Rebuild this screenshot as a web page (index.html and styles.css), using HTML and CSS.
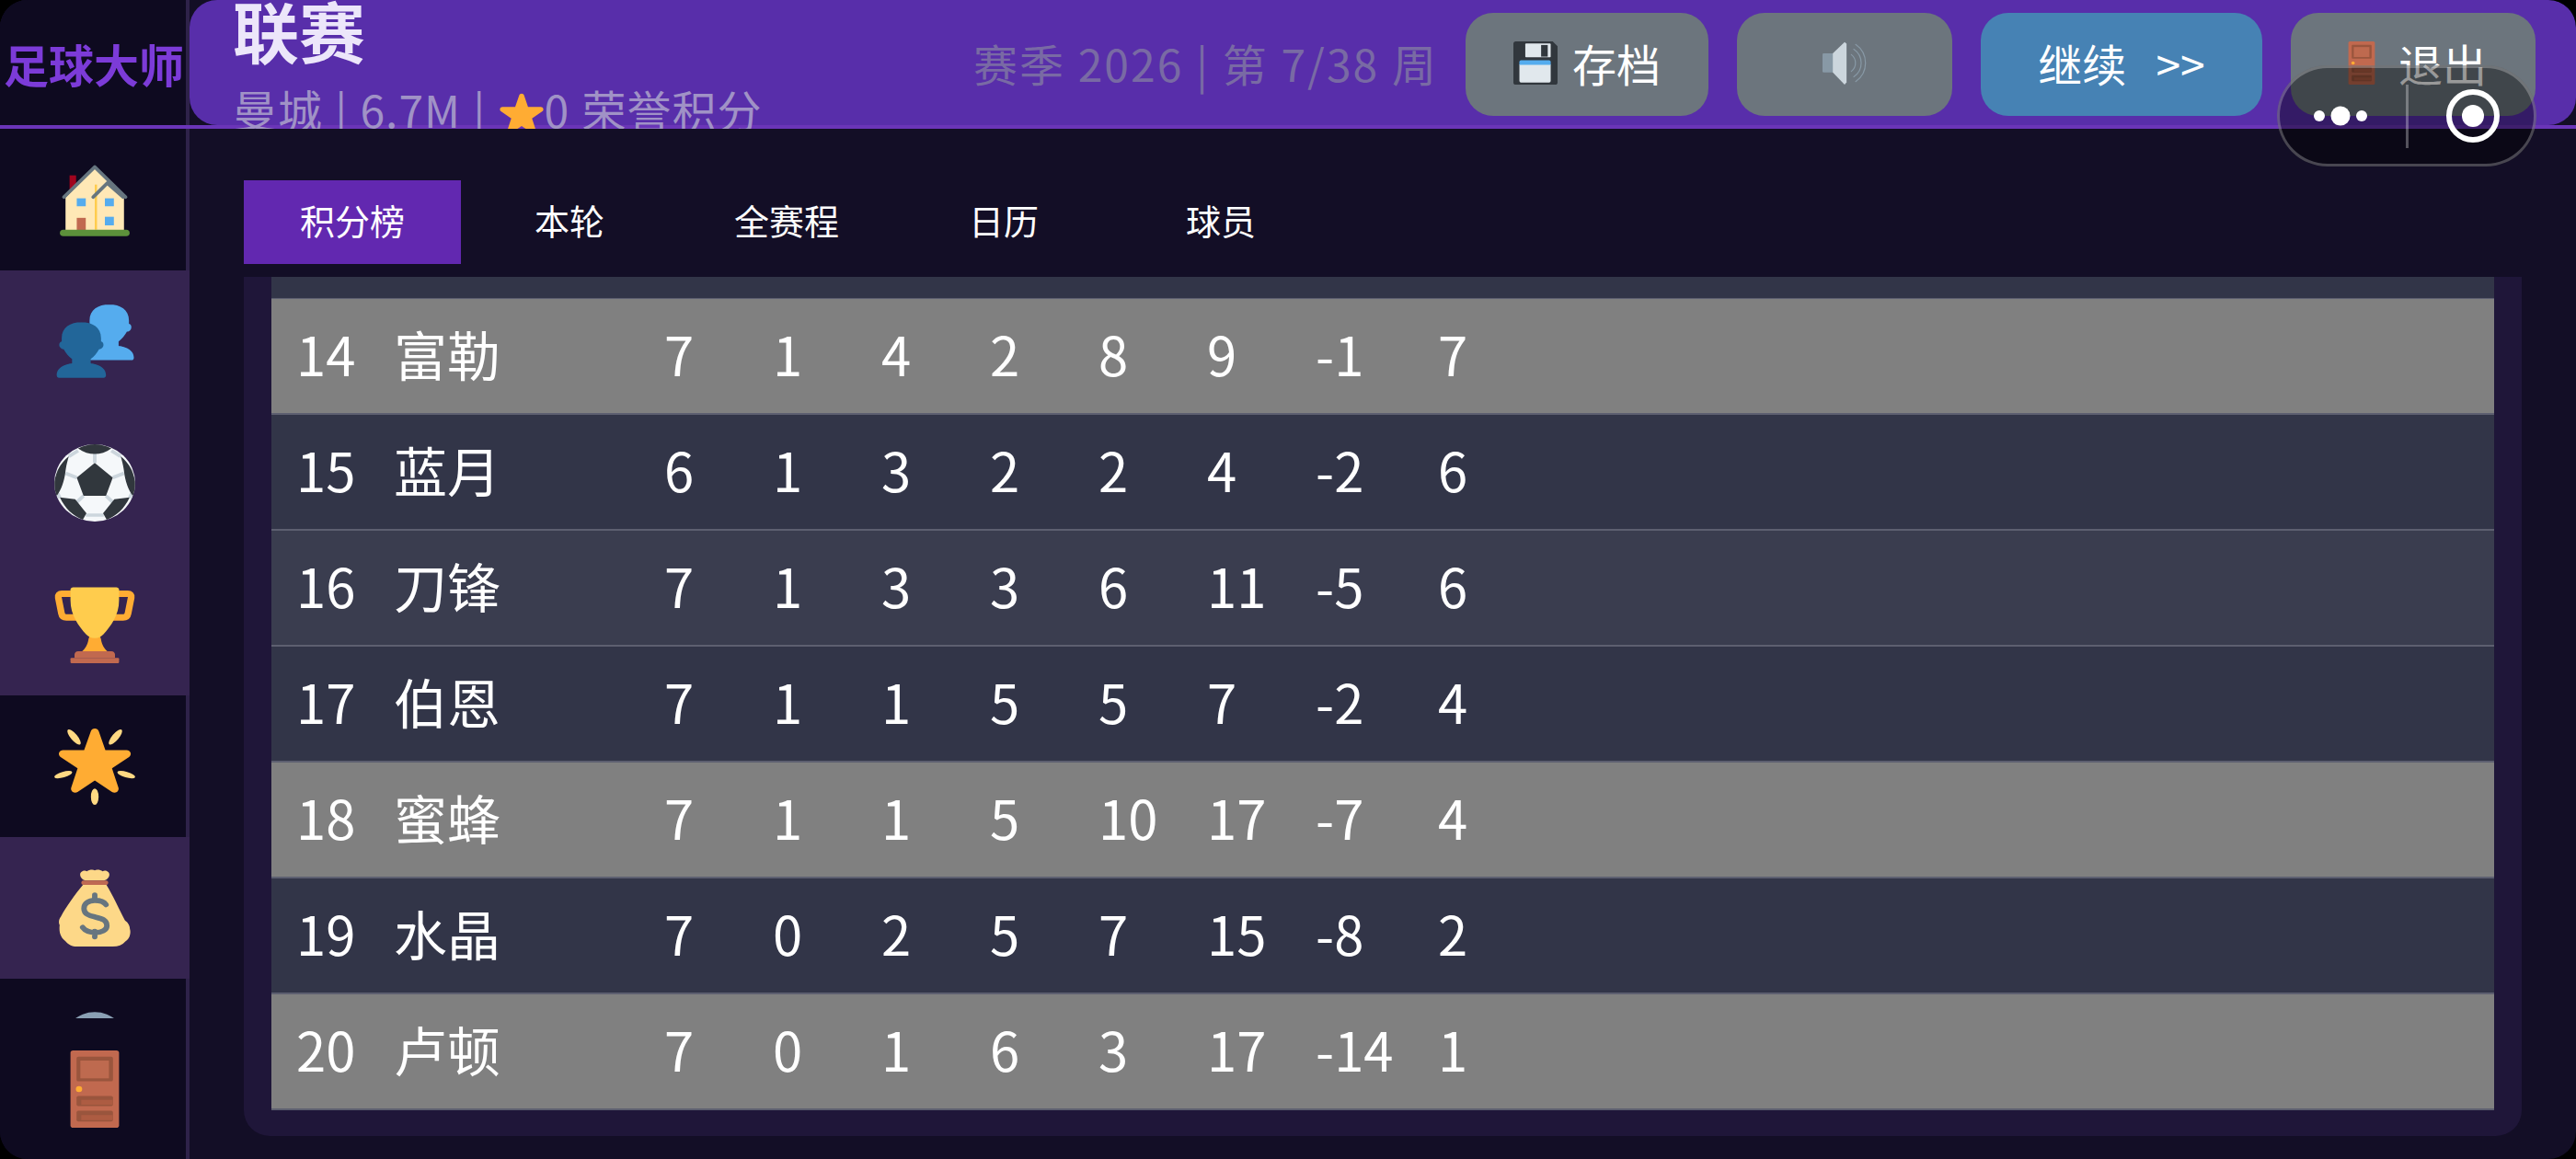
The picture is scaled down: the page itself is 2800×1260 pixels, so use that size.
FILE: index.html
```html
<!DOCTYPE html>
<html lang="zh">
<head>
  <meta charset="utf-8">
  <title>足球大师</title>
  <link rel="stylesheet" href="styles.css">
</head>
<body>
  <svg class="icon-defs" width="0" height="0">
    <defs>
      <symbol id="i-star" viewBox="0 0 36 36" preserveAspectRatio="none">
        <path id="star-shape" fill="#FFAC33" d="M27.287 34.627c-.404 0-.806-.124-1.152-.371L18 28.422l-8.135 5.834c-.693.496-1.623.496-2.312-.008-.689-.499-.979-1.385-.721-2.194l3.034-9.792-8.062-5.681c-.685-.505-.97-1.393-.708-2.203.264-.808 1.016-1.357 1.866-1.363L12.947 13l3.179-9.549c.268-.809 1.023-1.353 1.874-1.353.851 0 1.606.545 1.875 1.353L23 13l10.036.015c.853.006 1.606.556 1.867 1.363.263.81-.022 1.698-.708 2.203l-8.062 5.681 3.034 9.792c.26.809-.033 1.695-.72 2.194-.347.254-.753.379-1.16.379z"/>
      </symbol>
      <symbol id="i-door" viewBox="0 0 36 36" preserveAspectRatio="none">
        <rect x="7.2" y="0" width="21.6" height="36" rx="1.2" fill="#C1694F"/>
        <rect x="9.9" y="2.9" width="16.2" height="11.5" rx=".8" fill="#99553D"/>
        <rect x="11.6" y="4.7" width="12.7" height="8.3" fill="#BE6A4F"/>
        <circle cx="11" cy="18" r="1.4" fill="#FFAC33"/>
        <rect x="9.9" y="21.2" width="16.2" height="4.7" rx=".8" fill="#99553D"/>
        <rect x="12" y="23" width="14" height="2.3" fill="#AD5C42"/>
        <rect x="9.9" y="28.1" width="16.2" height="5" rx=".8" fill="#99553D"/>
        <rect x="12" y="30.1" width="14" height="2.4" fill="#AD5C42"/>
      </symbol>
    </defs>
  </svg>

  <div class="app">
    <div class="topbar">
      <div class="logo">足球大师</div>
      <div class="header-main">
        <div class="title-block">
          <div class="page-title">联赛</div>
          <div class="club-info">曼城 | 6.7M | <svg class="star-small"><use href="#i-star"/></svg>0 荣誉积分</div>
        </div>
        <div class="season">赛季 2026 | 第 7/38 周</div>
        <div class="btn-group">
          <div class="btn">
            <svg class="btn-icon" viewBox="0 0 36 36" preserveAspectRatio="none">
              <path fill="#31373D" d="M2 0h30l4 4v30a2 2 0 0 1-2 2H2a2 2 0 0 1-2-2V2a2 2 0 0 1 2-2z"/>
              <rect x="9.7" y="1.8" width="20.7" height="11.4" rx=".6" fill="#E1E8ED"/>
              <rect x="22.6" y="3" width="5.4" height="9.7" fill="#31373D"/>
              <path fill="#E1E8ED" d="M4.9 19h25.5v14a1.300 1.300 0 0 1-1.300 1.300H6.200a1.300 1.300 0 0 1-1.300-1.300z"/>
              <path fill="#55ACEE" d="M4.900 19.500v-2.500a1.300 1.300 0 0 1 1.300-1.300h22.900a1.300 1.300 0 0 1 1.300 1.300v2.500z"/>
            </svg>
            <span>存档</span>
          </div>
          <div class="btn btn-sound">
            <svg class="btn-icon" viewBox="0 0 36 36" preserveAspectRatio="none">
              <rect x="0" y="9.900" width="9" height="16" rx="1" fill="#8899A6"/>
              <path fill="#CCD6DD" d="M8.400 9.900L18 .5l1.600 1.500v32L18 36l-9.600-10.100z"/>
              <path fill="none" stroke="#8899A6" stroke-width=".9" stroke-linecap="round" d="M23.500 11a9 9 0 0 1 0 14M25.500 6.500a14 14 0 0 1 0 23M27 2.500a19 19 0 0 1 0 31"/>
            </svg>
          </div>
          <div class="btn btn-next">继续&nbsp;&nbsp;&nbsp;&gt;&gt;</div>
          <div class="btn btn-exit">
            <svg class="btn-icon"><use href="#i-door"/></svg>
            <span>退出</span>
          </div>
        </div>
      </div>
    </div>

    <div class="content">
      <div class="sidebar">
        <div class="nav-list">
          <div class="nav-item">
            <svg class="nav-icon" viewBox="0 0 36 36" preserveAspectRatio="none">
              <rect x="6.800" y="6.700" width="2.900" height="6.500" fill="#A0041E"/>
              <path fill="#FFE8B6" d="M5 17L18 3l13 14v16H5z"/>
              <rect x="18" y="11" width="1" height="21" fill="#FFCC4D"/>
              <rect x="10" y="17.400" width="4" height="3.700" fill="#55ACEE"/>
              <rect x="22.500" y="17.400" width="4" height="3.700" fill="#55ACEE"/>
              <rect x="22.500" y="26" width="4" height="4" fill="#55ACEE"/>
              <rect x="10" y="26.500" width="4" height="6" fill="#C1694F"/>
              <path fill="none" stroke="#66757F" stroke-width="1.600" stroke-linecap="round" stroke-linejoin="round" d="M4.300 16.800L18 2.800l13.700 14M17.300 16.800l6.300-6.500 7 6.500"/>
              <rect x="2.500" y="32" width="31" height="3" rx="1.500" fill="#5C913B"/>
            </svg>
          </div>
          <div class="nav-item active">
            <svg class="nav-icon" viewBox="0 0 36 36" preserveAspectRatio="none">
              <path fill="#55ACEE" transform="translate(12.400 -8.200)" d="M12 9.100c5 0 8.800 2.400 8.800 7.400v1.600c1 .2 1.400 1.600.8 2.600-.4.700-1 1-1.700 1-.9 1.800-2.300 3.400-3.700 4.600v2c2.400.3 6.800 1.500 6.800 5.600 0 .7-.5 1.100-1 1.100H2.100c-.6 0-1-.4-1-1.100 0-4.100 4.400-5.300 6.800-5.600v-2c-1.400-1.200-2.800-2.800-3.700-4.600-.7 0-1.300-.3-1.700-1-.6-1-.2-2.400.8-2.600v-1.600c0-5 3.800-7.400 8.800-7.400z"/>
              <path fill="#226699" d="M12 9.100c5 0 8.800 2.400 8.800 7.400v1.600c1 .2 1.400 1.600.8 2.600-.4.700-1 1-1.700 1-.9 1.800-2.300 3.400-3.700 4.600v2c2.400.3 6.800 1.500 6.800 5.600 0 .7-.5 1.100-1 1.100H2.100c-.6 0-1-.4-1-1.100 0-4.100 4.400-5.300 6.800-5.600v-2c-1.400-1.200-2.800-2.800-3.700-4.600-.7 0-1.300-.3-1.700-1-.6-1-.2-2.400.8-2.600v-1.600c0-5 3.800-7.400 8.800-7.400z"/>
            </svg>
          </div>
          <div class="nav-item active">
            <svg class="nav-icon" viewBox="0 0 36 36" preserveAspectRatio="none">
              <circle cx="18" cy="18" r="18" fill="#F5F8FA"/>
              <path fill="none" stroke="#CCD6DD" stroke-width="1.600" d="M18 8.700V4M26 15.500l5-2M23 24l3.500 3.500M13 24l-3.500 3.500M10 15.500l-5-2M6.500 5.600L10.600 3M29.500 5.600L25.400 3M14 33h8M2.500 25l-1-2M33.500 25l1-2"/>
              <path fill="#31373D" d="M18 8.700l8 6.800-3 8.500H13l-3-8.500zM10.600 1.900C13 .7 15.500 0 18 0s5 .7 7.400 1.900C23 3.800 20.500 4.500 18 4.500s-5-.7-7.400-2.600zM6.500 5.600C3 8.500.7 12.500.1 17.400c-.1 2.400.2 4.600 1 6.600 2.200-3 3.300-7 3.800-10.700.3-3 .9-5.400 1.600-7.700zM29.500 5.600c3.500 2.900 5.800 6.900 6.400 11.800.1 2.400-.2 4.600-1 6.600-2.200-3-3.300-7-3.800-10.700-.3-3-.9-5.400-1.600-7.700zM2.500 24.800l6.800.8 5 6.500-1.600 3c-4.500-1.600-8-5.400-10.200-10.300zM33.500 24.800l-6.800.8-5 6.500 1.600 3c4.500-1.600 8-5.400 10.200-10.300z"/>
            </svg>
          </div>
          <div class="nav-item active">
            <svg class="nav-icon" viewBox="0 0 36 36" preserveAspectRatio="none">
              <path fill="none" stroke="#FFAC33" stroke-width="3" stroke-linejoin="round" d="M9 3.600H3.300c-1 0-1.700.8-1.500 1.800l1.400 7.400c.2 1.200 1 1.900 2.200 1.900H12M27 3.600h5.700c1 0 1.700.8 1.500 1.800l-1.400 7.400c-.2 1.200-1 1.900-2.200 1.900H24"/>
              <path fill="#FFAC33" d="M16 22h4l.8 3c.4 2.500 1.500 4.500 3 5.600H12.200c1.500-1.100 2.600-3.100 3-5.600z"/>
              <path fill="#FFCC4D" d="M7.200 1.600c0-.6.600-1 1.200-1h19.200c.6 0 1.200.4 1.200 1v5c0 7-3.600 12-7 16-.9 1-2 1.700-3.800 1.700s-2.900-.7-3.800-1.700c-3.400-4-7-9-7-16z"/>
              <path fill="#C1694F" d="M9 33.500v-1.500c0-.9.700-1.600 1.600-1.600h14.800c.9 0 1.600.7 1.600 1.600v1.500z"/>
              <rect x="7.200" y="33.500" width="21.600" height="2.500" rx=".5" fill="#C1694F"/>
            </svg>
          </div>
          <div class="nav-item">
            <svg class="nav-icon" viewBox="0 0 36 36" preserveAspectRatio="none">
              <g fill="#FFD983">
                <ellipse cx="8.800" cy="4.400" rx="1.500" ry="4.400" transform="rotate(-38.600 8.800 4.400)"/>
                <ellipse cx="27.200" cy="4.400" rx="1.500" ry="4.400" transform="rotate(38.600 27.200 4.400)"/>
                <ellipse cx="4" cy="21.900" rx="4.100" ry="1.300" transform="rotate(-17 4 21.900)"/>
                <ellipse cx="32" cy="21.900" rx="4.100" ry="1.300" transform="rotate(17 32 21.900)"/>
                <ellipse cx="18" cy="32.200" rx="1.700" ry="3.800"/>
              </g>
              <path fill="#FFAC33" transform="translate(1.100 -1.500) scale(.94 .92)" d="M27.287 34.627c-.404 0-.806-.124-1.152-.371L18 28.422l-8.135 5.834c-.693.496-1.623.496-2.312-.008-.689-.499-.979-1.385-.721-2.194l3.034-9.792-8.062-5.681c-.685-.505-.97-1.393-.708-2.203.264-.808 1.016-1.357 1.866-1.363L12.947 13l3.179-9.549c.268-.809 1.023-1.353 1.874-1.353.851 0 1.606.545 1.875 1.353L23 13l10.036.015c.853.006 1.606.556 1.867 1.363.263.81-.022 1.698-.708 2.203l-8.062 5.681 3.034 9.792c.26.809-.033 1.695-.72 2.194-.347.254-.753.379-1.16.379z"/>
            </svg>
          </div>
          <div class="nav-item active">
            <svg class="nav-icon" viewBox="0 0 36 36" preserveAspectRatio="none">
              <path fill="#FDD888" d="M13 7C9 12 5 18 3 22c-1 1.200-1.200 3-.6 4-.4 3 .4 6 2.500 7.400C6 35 8 36 10 36h16c2.500 0 4.300-.8 5.600-2.400 2-1.200 2.600-4 2-5.800 0-1.800-1-3-2.200-4C29 19 26 12 23 7z"/>
              <path fill="#FDD888" d="M11.500 2.500c0-1.500 2-2.300 3-1.500.8-.7 2.600-1 3.500-.5.900-.5 2.700-.2 3.500.5 1-.8 3 0 3 1.500s-1.300 2.800-3 2.800h-7c-1.700 0-3-1.300-3-2.800z"/>
              <rect x="12" y="5.300" width="12" height="2" rx="1" fill="#BF6952"/>
              <path fill="none" stroke="#67757F" stroke-width="2.400" stroke-linecap="round" d="M23 16.500c-1-1.600-3-2-5-2-2.800 0-4.800 1.500-4.800 3.800 0 2.600 2.400 3.300 4.800 3.900 2.600.7 5.400 1.200 5.400 4 0 2.200-2.400 3.300-5.200 3.300-2.200 0-4.400-.7-5.600-2.400M18 12v2.500M18 29v2.500"/>
            </svg>
          </div>
          <div class="nav-item">
            <svg class="nav-icon" viewBox="0 0 36 36" preserveAspectRatio="none">
              <circle cx="18" cy="14.500" r="14" fill="#8AA0B4"/>
            </svg>
          </div>
        </div>
        <div class="nav-exit">
          <svg class="nav-icon"><use href="#i-door"/></svg>
        </div>
      </div>

      <div class="main">
        <div class="tabs">
          <div class="tab active">积分榜</div>
          <div class="tab">本轮</div>
          <div class="tab">全赛程</div>
          <div class="tab">日历</div>
          <div class="tab">球员</div>
        </div>
        <div class="panel">
          <div class="league-table">
            <div class="row-cut"></div>
            <div class="row gray"><span>14</span><span>富勒</span><span>7</span><span>1</span><span>4</span><span>2</span><span>8</span><span>9</span><span>-1</span><span>7</span></div>
            <div class="row"><span>15</span><span>蓝月</span><span>6</span><span>1</span><span>3</span><span>2</span><span>2</span><span>4</span><span>-2</span><span>6</span></div>
            <div class="row stripe"><span>16</span><span>刀锋</span><span>7</span><span>1</span><span>3</span><span>3</span><span>6</span><span>11</span><span>-5</span><span>6</span></div>
            <div class="row"><span>17</span><span>伯恩</span><span>7</span><span>1</span><span>1</span><span>5</span><span>5</span><span>7</span><span>-2</span><span>4</span></div>
            <div class="row gray"><span>18</span><span>蜜蜂</span><span>7</span><span>1</span><span>1</span><span>5</span><span>10</span><span>17</span><span>-7</span><span>4</span></div>
            <div class="row"><span>19</span><span>水晶</span><span>7</span><span>0</span><span>2</span><span>5</span><span>7</span><span>15</span><span>-8</span><span>2</span></div>
            <div class="row gray"><span>20</span><span>卢顿</span><span>7</span><span>0</span><span>1</span><span>6</span><span>3</span><span>17</span><span>-14</span><span>1</span></div>
          </div>
        </div>
      </div>
    </div>

    <div class="capsule">
      <svg width="282" height="110" viewBox="0 0 282 110">
        <g fill="#fff">
          <circle cx="46" cy="55" r="6"/>
          <circle cx="69" cy="55" r="10.500"/>
          <circle cx="92" cy="55" r="6"/>
          <circle cx="213" cy="55" r="12"/>
        </g>
        <circle cx="213" cy="55" r="26" fill="none" stroke="#fff" stroke-width="6"/>
        <rect x="140" y="21" width="3" height="69" fill="rgba(255,255,255,0.3)"/>
      </svg>
    </div>
  </div>
</body>
</html>
```

FILE: styles.css
```css
* {
  box-sizing: border-box;
}

body {
  margin: 0;
  background: #000;
  font-family: "Noto Sans CJK SC", "Noto Sans", sans-serif;
  color: #fff;
}

.icon-defs {
  display: block;
  height: 0;
}

.app {
  position: relative;
  display: flex;
  flex-direction: column;
  width: 2800px;
  height: 1260px;
  overflow: hidden;
  border-radius: 30px;
  background: #130e26;
}

.topbar {
  display: flex;
  flex: none;
  height: 140px;
  overflow: hidden;
  background: #130e26;
  box-shadow: inset 0 -4px 0 #6a35b8;
}

.logo {
  display: flex;
  flex: none;
  align-items: center;
  justify-content: center;
  width: 206px;
  height: 136px;
  padding-left: 2px;
  border-right: 4px solid #2e2249;
  background: #0e0a20;
  color: #7c3bd8;
  font-size: 49px;
  font-weight: 700;
  line-height: 1;
  white-space: nowrap;
}

.header-main {
  display: flex;
  flex: 1;
  align-items: center;
  height: 136px;
  padding: 0 44px 0 47px;
  border-radius: 30px;
  background: #582eaa;
}

.title-block {
  align-self: flex-start;
  height: 136px;
}

.page-title {
  height: 68px;
  color: #ece6fa;
  font-size: 72px;
  font-weight: 700;
  line-height: 64px;
}

.club-info {
  margin-top: 22px;
  color: #a092c6;
  font-size: 48px;
  letter-spacing: 1px;
  word-spacing: 1.5px;
  line-height: 56px;
  white-space: nowrap;
}

.star-small {
  width: 50px;
  height: 48px;
  vertical-align: -8px;
}

.season {
  margin-left: auto;
  margin-right: 30px;
  color: #796aa4;
  font-size: 48px;
  letter-spacing: 2px;
  word-spacing: 1px;
  white-space: nowrap;
}

.btn-group {
  display: flex;
  gap: 31px;
  margin-top: 4px;
}

.btn {
  display: flex;
  align-items: center;
  justify-content: center;
  gap: 16px;
  height: 112px;
  padding: 0 52px 4px;
  border-radius: 30px;
  background: #6c757d;
  font-size: 48px;
  white-space: nowrap;
}

.btn-icon {
  flex: none;
  width: 48px;
  height: 47px;
}

.btn-sound {
  width: 234px;
}

.btn-next {
  width: 306px;
  background: #4682b4;
}

.btn-exit {
  width: 266px;
  padding: 0 0 4px;
}

.content {
  display: flex;
  flex: 1;
  min-height: 0;
}

.sidebar {
  display: flex;
  flex: none;
  flex-direction: column;
  width: 206px;
  background: #0e0a20;
}

.nav-list {
  flex: none;
  height: 967px;
  overflow: hidden;
}

.nav-item,
.nav-exit {
  display: flex;
  align-items: center;
  justify-content: center;
  border-right: 4px solid #2e2249;
  padding-left: 4px;
}

.nav-item {
  height: 154px;
}

.nav-item.active {
  border-right: 0;
  padding-left: 0;
  background: #352450;
}

.nav-exit {
  flex: 1;
}

.nav-icon {
  width: 88px;
  height: 84px;
}

.main {
  display: flex;
  flex: 1;
  flex-direction: column;
  min-width: 0;
  padding: 56px 59px 25px;
}

.tabs {
  display: flex;
  flex: none;
  height: 91px;
  margin-bottom: 14px;
}

.tab {
  display: flex;
  align-items: center;
  justify-content: center;
  width: 236px;
  padding-bottom: 7px;
  font-size: 38px;
}

.tab.active {
  background: #6228b0;
}

.panel {
  flex: 1;
  padding: 0 30px 28px;
  border-radius: 0 0 28px 28px;
  background: #1f1639;
}

.row-cut {
  height: 24px;
  border-bottom: 1px solid #5d5f70;
  background: #323548;
}

.row {
  display: grid;
  grid-template-columns: 106px 294px repeat(6, 118px) 133px 1fr;
  align-items: center;
  height: 126px;
  padding: 0 0 6px 27px;
  border-bottom: 2px solid #5d5f70;
  background: #323548;
  font-size: 58px;
  line-height: 1;
}

.row.stripe {
  background: #3a3d4f;
}

.row.gray {
  background: #808080;
}

.capsule {
  position: absolute;
  top: 71px;
  left: 2475px;
  width: 282px;
  height: 110px;
  border-radius: 55px;
  background: rgba(0, 0, 0, 0.4);
  box-shadow: inset 0 0 0 3px rgba(255, 255, 255, 0.25);
}

.capsule svg {
  display: block;
}
```
